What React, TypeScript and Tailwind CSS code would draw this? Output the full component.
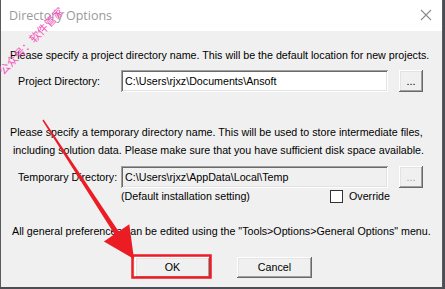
import React from 'react';

const raised =
  'shadow-[inset_-1px_-1px_#696969,inset_1px_1px_#ffffff,inset_-2px_-2px_#a0a0a0,inset_2px_2px_#e3e3e3]';
const sunken =
  'shadow-[inset_1px_1px_#a0a0a0,inset_-1px_-1px_#ffffff,inset_2px_2px_#696969,inset_-2px_-2px_#e3e3e3]';

function WinButton({ label, className = '', disabled = false }: { label: string; className?: string; disabled?: boolean }) {
  return (
    <div
      className={`flex items-center justify-center bg-[#f0f0f0] ${raised} ${disabled ? 'text-[#a0a0a0]' : 'text-black'} ${className}`}
    >
      {label}
    </div>
  );
}

export default function App() {
  return (
    <div className="relative w-[445px] h-[289px] overflow-hidden bg-[#4b4f55] font-['Liberation_Sans',Arial,sans-serif] text-[10.7px] leading-[13px] text-black">
      {/* 窗口 */}
      <div className="w-[443px] h-[287px] flex flex-col border-l border-r border-[#5a5a5a] bg-[#f0f0f0]">
        {/* 标题栏 */}
        <div className="h-[31px] bg-white flex items-center justify-between pl-[8px] pr-[10px]">
          <span className="font-['Open_Sans',sans-serif] text-[12.5px] text-[#9a9a9a]">Directory Options</span>
          <svg width="12" height="12" viewBox="0 0 12 12" className="mt-[-1px]">
            <path d="M1 1 L11 11 M11 1 L1 11" stroke="#8a8a8a" strokeWidth="1.1" fill="none" />
          </svg>
        </div>

        {/* 内容 */}
        <div className="flex flex-col pl-[9px]">
          <div className="mt-[18px] h-[13px] whitespace-nowrap">
            Please specify a project directory name. This will be the default location for new projects.
          </div>

          <div className="mt-[8px] h-[22px] flex items-center">
            <span className="w-[111px] pl-[8px]">Project Directory:</span>
            <div className={`w-[267px] h-[22px] bg-white flex items-center pl-[4px] ${sunken}`}>
              C:\Users\rjxz\Documents\Ansoft
            </div>
            <WinButton label="..." className="ml-[11px] w-[24px] h-[22px]" />
          </div>

          <div className="mt-[31px] leading-[18px] whitespace-nowrap">
            Please specify a temporary directory name. This will be used to store intermediate files,
          </div>
          <div className="leading-[18px] pl-[3px] whitespace-nowrap">
            including solution data. Please make sure that you have sufficient disk space available.
          </div>

          <div className="mt-[7px] h-[22px] flex items-center">
            <span className="w-[111px] pl-[8px]">Temporary Directory:</span>
            <div className={`w-[267px] h-[22px] bg-[#f0f0f0] flex items-center pl-[4px] ${sunken}`}>
              C:\Users\rjxz\AppData\Local\Temp
            </div>
            <WinButton label="..." disabled className="ml-[11px] w-[24px] h-[22px]" />
          </div>

          <div className="mt-[2px] h-[13px] flex items-center">
            <span className="ml-[111px] w-[209px]">(Default installation setting)</span>
            <div className="w-[13px] h-[13px] bg-white border border-[#333]" />
            <span className="ml-[6px]">Override</span>
          </div>

          <div className="mt-[22px] h-[13px] pl-[2px] whitespace-nowrap">
            All general preferences can be edited using the "Tools&gt;Options&gt;General Options" menu.
          </div>

          <div className="mt-[19px] flex">
            <WinButton label="OK" className="ml-[125px] w-[75px] h-[21px]" />
            <WinButton label="Cancel" className="ml-[27px] w-[75px] h-[21px]" />
          </div>
        </div>
      </div>

      {/* 标注：红框和箭头 */}
      <svg className="absolute left-0 top-0 pointer-events-none" width="445" height="289">
        <rect x="132.5" y="255.5" width="78" height="22" fill="none" stroke="#ec1c24" strokeWidth="2.5" />
        <polygon
          points="43.6,119.6 118.7,231.5 129.3,224.3 134,259 103.9,241.5 114.5,234.3 42.4,120.4"
          fill="#ec1c24"
        />
      </svg>

      {/* 水印 */}
      <div className="absolute left-[0px] top-[66px] origin-left rotate-[-46deg] whitespace-nowrap font-['Noto_Sans_CJK_SC',sans-serif] text-[11px] leading-[12px] text-[#f24fb8]">
        公众号：软件管家
      </div>
    </div>
  );
}
